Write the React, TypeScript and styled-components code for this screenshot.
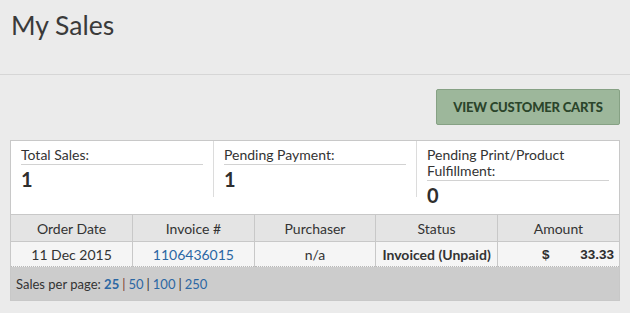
import React from 'react';
import styled, { createGlobalStyle } from 'styled-components';

const GlobalStyle = createGlobalStyle`
  html, body {
    margin: 0;
    padding: 0;
    background: #ebebeb;
    font-family: Lato, "Open Sans", sans-serif;
    color: #333;
  }
`;

const PageHeader = styled.header`
  height: 75px;
  border-bottom: 1px solid #d6d6d6;
  padding: 0 11px;
  box-sizing: border-box;
`;

const Title = styled.h1`
  margin: 0;
  padding-top: 8px;
  font-size: 26.5px;
  line-height: 34px;
  font-weight: 400;
  color: #3a3a3a;
`;

const Toolbar = styled.div`
  display: flex;
  justify-content: flex-end;
  padding: 14px 10px 15px;
`;

const CartsButton = styled.button`
  height: 36px;
  width: 184px;
  box-sizing: border-box;
  background: #9db79b;
  border: 1px solid #86a184;
  border-radius: 2px;
  color: #2b452b;
  font-family: Lato, sans-serif;
  font-weight: 900;
  font-size: 13px;
  text-transform: uppercase;
  letter-spacing: -0.2px;
  cursor: pointer;
  padding: 0;
`;

const Panel = styled.section`
  margin: 0 10px;
  border: 1px solid #c8c8c8;
  background: #fff;
`;

const Stats = styled.div`
  display: grid;
  grid-template-columns: 202px 203px 1fr;
  height: 73px;
  align-items: start;
`;

const StatCol = styled.div<{ $first?: boolean }>`
  height: 56px;
  padding: 6px 10px 0;
  border-left: ${(p) => (p.$first ? 'none' : '1px solid #dcdcdc')};
  box-sizing: border-box;
  overflow: visible;
`;

const StatLabel = styled.div`
  font-size: 14px;
  line-height: 16px;
  padding-bottom: 1px;
  border-bottom: 1px solid #d2d2d2;
  color: #333;
`;

const StatValue = styled.div`
  font-size: 20px;
  font-weight: 700;
  line-height: 24px;
  padding-top: 2px;
  color: #2e2e2e;
`;

const Table = styled.table`
  width: 100%;
  border-collapse: collapse;
  table-layout: fixed;
  font-size: 14px;
`;

const HeadCell = styled.th`
  height: 26px;
  padding: 0;
  font-weight: 400;
  background: #e4e4e4;
  border-top: 1px solid #c8c8c8;
  border-left: 1px solid #c8c8c8;
  text-align: center;
  color: #333;
  &:first-child {
    border-left: none;
  }
`;

const Cell = styled.td<{ $bold?: boolean }>`
  height: 24px;
  padding: 0;
  background: #f5f5f5;
  border-top: 1px solid #c8c8c8;
  border-left: 1px solid #c8c8c8;
  border-bottom: 1px dotted #b8b8b8;
  text-align: center;
  font-weight: ${(p) => (p.$bold ? 700 : 400)};
  color: #333;
  &:first-child {
    border-left: none;
  }
`;

const Link = styled.a<{ $bold?: boolean }>`
  color: #2b67a3;
  text-decoration: none;
  font-weight: ${(p) => (p.$bold ? 700 : 400)};
`;

const Amount = styled.div`
  display: flex;
  justify-content: space-between;
  padding: 0 5px 0 44px;
  font-family: "Liberation Sans", Arial, sans-serif;
  font-weight: 700;
  font-size: 13.5px;
  color: #2e2e2e;
`;

const Footer = styled.div`
  background: #cccccc;
  height: 33px;
  display: flex;
  align-items: center;
  padding-left: 5px;
  font-size: 13px;
  color: #333;
`;

const Sep = styled.span<{ $first?: boolean }>`
  color: ${(p) => (p.$first ? '#7a3b2e' : '#333')};
  margin: 0 3px;
`;

const stats = [
  { label: 'Total Sales:', value: '1' },
  { label: 'Pending Payment:', value: '1' },
  { label: 'Pending Print/Product Fulfillment:', value: '0' },
];

const pageSizes = ['25', '50', '100', '250'];

export default function App() {
  return (
    <>
      <GlobalStyle />
      <PageHeader>
        <Title>My Sales</Title>
      </PageHeader>
      <Toolbar>
        <CartsButton>View Customer Carts</CartsButton>
      </Toolbar>
      <Panel>
        <Stats>
          {stats.map((s, i) => (
            <StatCol key={s.label} $first={i === 0}>
              <StatLabel>{s.label}</StatLabel>
              <StatValue>{s.value}</StatValue>
            </StatCol>
          ))}
        </Stats>
        <Table>
          <thead>
            <tr>
              <HeadCell>Order Date</HeadCell>
              <HeadCell>Invoice #</HeadCell>
              <HeadCell>Purchaser</HeadCell>
              <HeadCell>Status</HeadCell>
              <HeadCell>Amount</HeadCell>
            </tr>
          </thead>
          <tbody>
            <tr>
              <Cell>11 Dec 2015</Cell>
              <Cell>
                <Link href="#">1106436015</Link>
              </Cell>
              <Cell>n/a</Cell>
              <Cell $bold>Invoiced (Unpaid)</Cell>
              <Cell>
                <Amount>
                  <span>$</span>
                  <span>33.33</span>
                </Amount>
              </Cell>
            </tr>
          </tbody>
        </Table>
        <Footer>
          <span>Sales per page:&nbsp;</span>
          {pageSizes.map((n, i) => (
            <React.Fragment key={n}>
              {i > 0 && <Sep $first={i === 1}>|</Sep>}
              <Link href="#" $bold={i === 0}>
                {n}
              </Link>
            </React.Fragment>
          ))}
        </Footer>
      </Panel>
    </>
  );
}
